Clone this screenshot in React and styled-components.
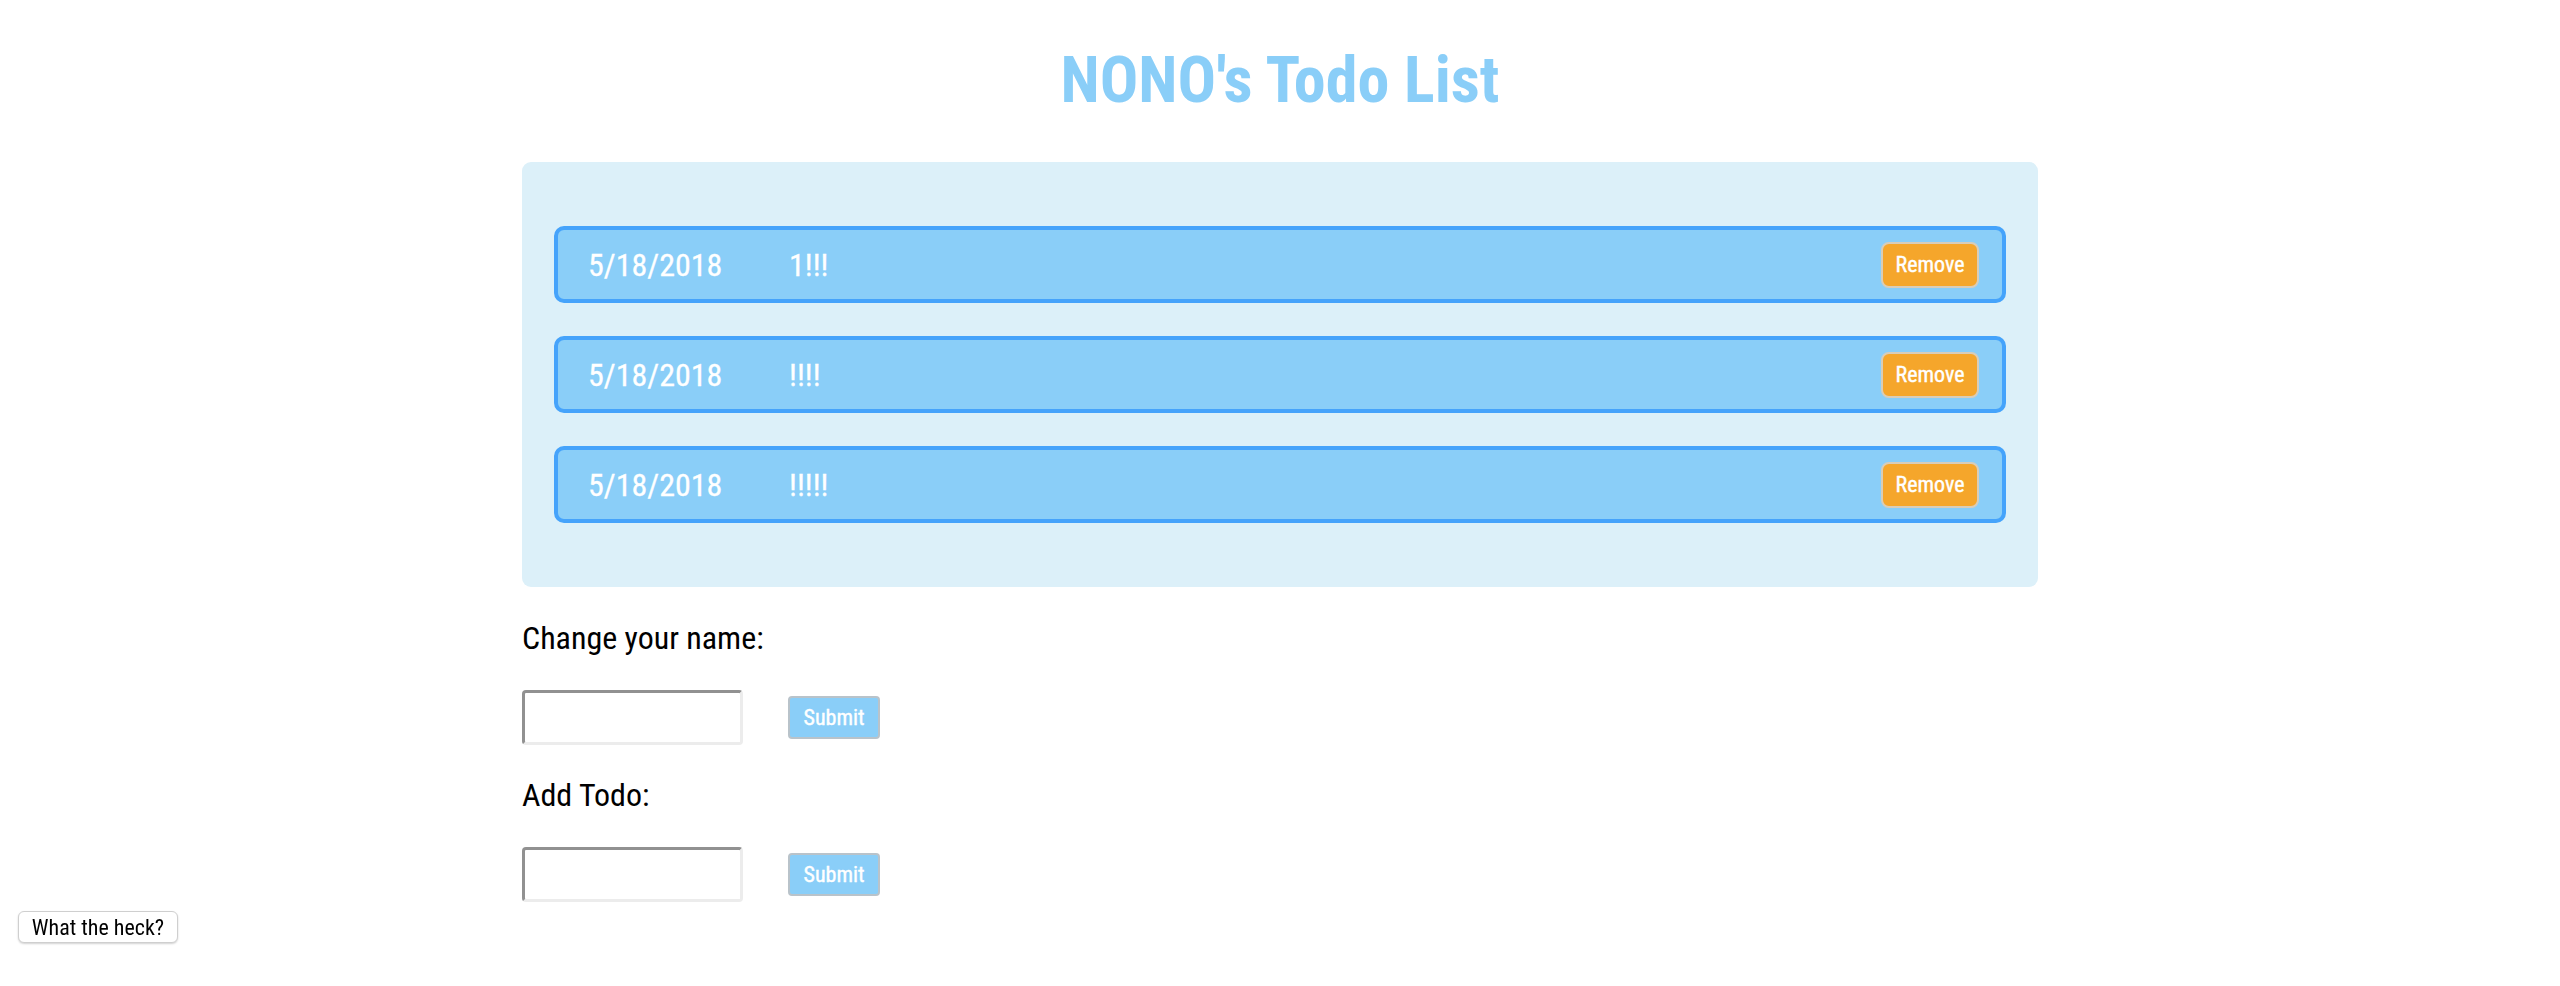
import React from "react";
import styled, { createGlobalStyle } from "styled-components";

const font = `"Roboto Condensed", Roboto, "Liberation Sans Narrow", sans-serif`;
const sky = "#8acef8";

const GlobalStyle = createGlobalStyle`
  html, body {
    margin: 0;
    padding: 0;
    background: #fff;
  }

  body {
    font-family: ${font};
    color: #000;
  }
`;

const Page = styled.div`
  width: 1516px;
  margin: 0 auto;
  padding-bottom: 40px;
`;

const Title = styled.h1`
  margin: 41px 0 0;
  font-size: 64px;
  line-height: 80px;
  font-weight: 700;
  text-align: center;
  color: ${sky};
`;

const Panel = styled.div`
  margin-top: 41px;
  padding: 64px 32px;
  background: #dcf0f9;
  border-radius: 9px;
  display: flex;
  flex-direction: column;
  gap: 33px;
`;

const Row = styled.div`
  box-sizing: border-box;
  height: 77px;
  display: flex;
  align-items: center;
  padding: 0 23px 0 30px;
  background: ${sky};
  border: 4px solid #45a3fb;
  border-radius: 10px;
  color: #fff;
  font-size: 32px;
  -webkit-text-stroke: 0.3px #fff;
`;

const Date = styled.span`
  width: 201px;
  flex: none;
`;

const Text = styled.span`
  flex: 1;
`;

const RemoveButton = styled.button`
  box-sizing: border-box;
  width: 98px;
  height: 46px;
  padding: 0;
  font-family: ${font};
  font-size: 22px;
  font-weight: 400;
  color: #fff;
  -webkit-text-stroke: 0.4px #fff;
  background: #f5a62b;
  border: 2px solid #d9cdb8;
  border-radius: 8px;
  cursor: pointer;
`;

const Label = styled.div`
  margin: ${(p) => (p.$first ? "33px" : "32px")} 0 33px;
  font-size: 32px;
  line-height: 37px;
`;

const FormRow = styled.div`
  display: flex;
  align-items: center;
  gap: 45px;
`;

const Input = styled.input`
  box-sizing: border-box;
  width: 221px;
  height: 55px;
  padding: 0 8px;
  font-family: ${font};
  font-size: 24px;
  border-style: solid;
  border-width: 3px;
  border-color: #919191 #ececec #ececec #919191;
  border-radius: 4px;
  outline: none;
`;

const SubmitButton = styled.button`
  box-sizing: border-box;
  width: 92px;
  height: 43px;
  padding: 0;
  font-family: ${font};
  font-size: 22px;
  font-weight: 400;
  color: #fff;
  -webkit-text-stroke: 0.4px #fff;
  background: ${sky};
  border: 2px solid #b9c3ca;
  border-radius: 4px;
  cursor: pointer;
`;

const HeckButton = styled.button`
  position: fixed;
  left: 18px;
  top: 911px;
  box-sizing: border-box;
  width: 160px;
  height: 32px;
  padding: 0;
  font-family: ${font};
  font-size: 22px;
  color: #000;
  background: #fff;
  border: 1px solid #cfcfcf;
  border-radius: 6px;
  box-shadow: 0 1px 2px rgba(0, 0, 0, 0.18);
  cursor: pointer;
`;

const todos = [
  { date: "5/18/2018", text: "1!!!" },
  { date: "5/18/2018", text: "!!!!" },
  { date: "5/18/2018", text: "!!!!!" },
];

export default function App() {
  return (
    <>
      <GlobalStyle />
      <Page>
        <Title>NONO's Todo List</Title>
        <Panel>
          {todos.map((todo, i) => (
            <Row key={i}>
              <Date>{todo.date}</Date>
              <Text>{todo.text}</Text>
              <RemoveButton>Remove</RemoveButton>
            </Row>
          ))}
        </Panel>
        <Label $first>Change your name:</Label>
        <FormRow>
          <Input type="text" />
          <SubmitButton>Submit</SubmitButton>
        </FormRow>
        <Label>Add Todo:</Label>
        <FormRow>
          <Input type="text" />
          <SubmitButton>Submit</SubmitButton>
        </FormRow>
      </Page>
      <HeckButton>What the heck?</HeckButton>
    </>
  );
}
